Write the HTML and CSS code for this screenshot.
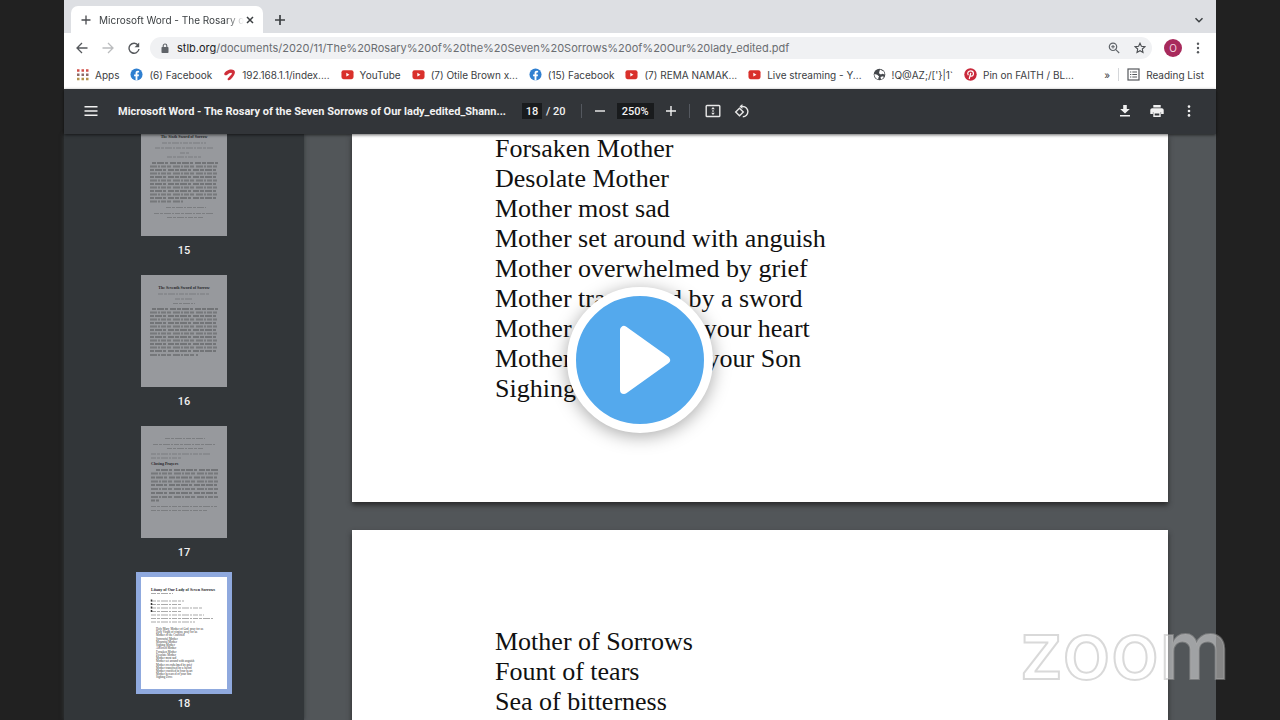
FILE: index.html
```html
<!DOCTYPE html>
<html lang="en">
<head>
    <meta charset="UTF-8">
    <meta name="viewport" content="width=device-width, initial-scale=1.0">
    <title>Microsoft Word - The Rosary of the Seven Sorrows of Our lady</title>
    <link rel="stylesheet" href="styles.css">
</head>
<body>
    <!-- Shared icons -->
    <svg class="defs" width="0" height="0" aria-hidden="true">
        <symbol id="facebook" viewBox="0 0 14 14">
            <circle cx="7" cy="7" r="6.5" fill="#2f7fd0"/>
            <path d="M6 13.4V9H4.4V7H6V5.6C6 3.9 7 3 8.5 3l1.3.1v1.7H9c-.8 0-1 .4-1 1V7h1.7l-.3 2H8v4.4z" fill="#fff"/>
        </symbol>
        <symbol id="youtube" viewBox="0 0 14 14">
            <rect x="0.5" y="2.5" width="13" height="9.5" rx="2.2" fill="#d9302b"/>
            <path d="M5.7 5.2v4l3.4-2z" fill="#fff"/>
        </symbol>
    </svg>

    <div class="screen">
        <!-- Tab strip -->
        <div class="tabs">
            <div class="tab">
                <svg width="10" height="10" viewBox="0 0 10 10"><path d="M5 .5v9M.5 5h9" stroke="#4a4c50" stroke-width="1.3"/></svg>
                <span class="tab-title">Microsoft Word - The Rosary o</span>
                <button class="icon" aria-label="Close tab"><svg width="8" height="8" viewBox="0 0 8 8"><path d="M1 1l6 6M7 1L1 7" stroke="#3c4043" stroke-width="1.5"/></svg></button>
            </div>
            <button class="icon new-tab" aria-label="New tab"><svg width="10" height="10" viewBox="0 0 10 10"><path d="M5 0v10M0 5h10" stroke="#3c4043" stroke-width="1.7"/></svg></button>
            <button class="icon push" aria-label="Search tabs"><svg width="10" height="10" viewBox="0 0 10 10"><path d="M1.5 3.2L5 6.7l3.5-3.5" fill="none" stroke="#3c4043" stroke-width="1.5"/></svg></button>
        </div>

        <!-- Address bar -->
        <div class="nav">
            <button class="icon" aria-label="Back"><svg width="12" height="12" viewBox="0 0 12 12"><path d="M11.5 6H1.2M6 1L1 6l5 5" fill="none" stroke="#55585c" stroke-width="1.3"/></svg></button>
            <button class="icon" aria-label="Forward"><svg width="12" height="12" viewBox="0 0 12 12"><path d="M.5 6h10.3M6 1l5 5-5 5" fill="none" stroke="#babcbe" stroke-width="1.3"/></svg></button>
            <button class="icon" aria-label="Reload"><svg width="12" height="12" viewBox="0 0 12 12"><path d="M10.2 3.4A5 5 0 1 0 11 7" fill="none" stroke="#55585c" stroke-width="1.4"/><path d="M11.2.6v4.6H6.6z" fill="#55585c"/></svg></button>
            <div class="address">
                <svg width="8" height="10" viewBox="0 0 8 10"><rect x="0.5" y="4" width="7" height="6" rx="0.8" fill="#5f6368"/><path d="M2.2 4.5V2.8a1.8 1.8 0 0 1 3.6 0v1.7" fill="none" stroke="#5f6368" stroke-width="1.1"/></svg>
                <label class="domain" for="url">stlb.org</label>
                <input class="url" id="url" type="text" value="/documents/2020/11/The%20Rosary%20of%20the%20Seven%20Sorrows%20of%20Our%20lady_edited.pdf">
                <button class="icon" aria-label="Zoom"><svg width="12" height="12" viewBox="0 0 12 12"><circle cx="5" cy="4.8" r="3.7" fill="none" stroke="#5f6368" stroke-width="1.2"/><path d="M7.8 7.6l3.4 3.4M3.2 4.8h3.6M5 3v3.6" stroke="#5f6368" stroke-width="1.1"/></svg></button>
                <button class="icon" aria-label="Bookmark"><svg width="12" height="12" viewBox="0 0 12 12"><path d="M6 1.2l1.4 3.1 3.5.4-2.6 2.3.7 3.5-3-1.8-3 1.8.7-3.5L1.1 4.7l3.5-.4z" fill="none" stroke="#4a4d51" stroke-width="1.1"/></svg></button>
            </div>
            <button class="avatar">O</button>
            <button class="icon" aria-label="Menu"><svg width="4" height="12" viewBox="0 0 4 12"><g fill="#55585c"><circle cx="2" cy="1.7" r="1.2"/><circle cx="2" cy="6" r="1.2"/><circle cx="2" cy="10.3" r="1.2"/></g></svg></button>
        </div>

        <!-- Bookmarks -->
        <div class="bookmarks">
            <a href="#">
                <svg width="13" height="13" viewBox="0 0 13 13"><path d="M1 2.5h12" stroke="#d2504a" stroke-width="2.5" stroke-dasharray="2.5 2"/><path d="M1 6.8h12" stroke="#8c6a68" stroke-width="2.5" stroke-dasharray="2.5 2"/><path d="M1 11.1h12" stroke="#b3924c" stroke-width="2.5" stroke-dasharray="2.5 2"/></svg>
                Apps
            </a>
            <a href="#"><svg width="13" height="13"><use href="#facebook"/></svg>(6) Facebook</a>
            <a href="#">
                <svg width="13" height="13" viewBox="0 0 13 13"><path d="M1.3 5.6C2.5 2 8.5.3 11 2.2c2.4 2-.2 6.3-3.5 9.3-1.2 1.1-3 1-2.9-.3.1-1.3 4.5-4.3 4.3-6C8.7 3.9 6 5 4.3 6.7 2.9 8 .8 7.2 1.3 5.6z" fill="#cf2f3a"/></svg>
                192.168.1.1/index....
            </a>
            <a href="#"><svg width="13" height="13"><use href="#youtube"/></svg>YouTube</a>
            <a href="#"><svg width="13" height="13"><use href="#youtube"/></svg>(7) Otile Brown x...</a>
            <a href="#"><svg width="13" height="13"><use href="#facebook"/></svg>(15) Facebook</a>
            <a href="#"><svg width="13" height="13"><use href="#youtube"/></svg>(7) REMA NAMAK...</a>
            <a href="#"><svg width="13" height="13"><use href="#youtube"/></svg>Live streaming - Y...</a>
            <a href="#">
                <svg width="13" height="13" viewBox="0 0 13 13"><circle cx="6.5" cy="6.5" r="5.8" fill="#45484c"/><path d="M7 1.5l4 2.3.6 2.7-2.2-.8-1.5.8L6 5.2l.3-1.5zM1.4 6l2.8.8 1.9 1.7-.8 1.5v1.6C3 11 1.3 8.8 1.4 6zM7.5 9l2.5-.7.8.7c-.6 1.2-1.6 2-2.8 2.5z" fill="#fff"/></svg>
                !Q@AZ;/['}|1`
            </a>
            <a href="#">
                <svg width="13" height="13" viewBox="0 0 13 13"><circle cx="6.5" cy="6.5" r="6.2" fill="#c9283a"/><path d="M4.3 7.2C2.8 4.8 4.5 2.9 6.7 2.9c3.6 0 3.4 5.2.7 5.2-.8 0-1.2-.5-1.2-.5M6.8 4.8L5.2 11" fill="none" stroke="#fff" stroke-width="1.2"/></svg>
                Pin on FAITH / BL...
            </a>
            <button class="more" aria-label="More bookmarks">»</button>
            <a class="reading" href="#">
                <svg width="13" height="13" viewBox="0 0 13 13"><rect x="1" y="1" width="11" height="11" fill="none" stroke="#55585c" stroke-width="1.2"/><path d="M3 4h1.3M3 6.5h1.3M3 9h1.3M5.3 4H10M5.3 6.5H10M5.3 9H10" stroke="#55585c" stroke-width="1.1"/></svg>
                Reading List
            </a>
        </div>

        <!-- PDF toolbar -->
        <header class="toolbar">
            <button class="icon" aria-label="Toggle sidebar"><svg width="14" height="12" viewBox="0 0 14 12"><path d="M.5 1.8h13M.5 6h13M.5 10.2h13" stroke="#f1f1f1" stroke-width="1.5"/></svg></button>
            <h1 class="doc-title">Microsoft Word - The Rosary of the Seven Sorrows of Our lady_edited_Shann...</h1>
            <div class="page-count">
                <input class="field page-no" type="text" value="18" aria-label="Page">
                <span>/ 20</span>
            </div>
            <span class="sep"></span>
            <div class="zoom-group">
                <button class="icon" aria-label="Zoom out"><svg width="12" height="12" viewBox="0 0 12 12"><path d="M1 6h10" stroke="#f1f1f1" stroke-width="1.4"/></svg></button>
                <input class="field zoom-level" type="text" value="250%" aria-label="Zoom level">
                <button class="icon" aria-label="Zoom in"><svg width="12" height="12" viewBox="0 0 12 12"><path d="M1 6h10M6 1v10" stroke="#f1f1f1" stroke-width="1.4"/></svg></button>
            </div>
            <span class="sep"></span>
            <button class="icon fit" aria-label="Fit to page"><svg width="16" height="14" viewBox="0 0 16 14"><rect x="1.2" y="1.5" width="13.6" height="11" rx="0.8" fill="none" stroke="#e8e8e8" stroke-width="1.4"/><path d="M8 3l1.8 2.200H6.200zM8 11L6.200 8.800h3.600zM7.300 6.300h1.400v1.400H7.300z" fill="#e8e8e8"/></svg></button>
            <button class="icon" aria-label="Rotate"><svg width="16" height="14" viewBox="0 0 16 14"><path d="M5.5 4.2l3.8 3.7-3.8 3.8L1.7 7.9z" fill="none" stroke="#e8e8e8" stroke-width="1.4"/><path d="M6.5 2.5h2.3a5.1 5.1 0 0 1 0 10.2" fill="none" stroke="#e8e8e8" stroke-width="1.4"/><path d="M8.4 0v5L5.5 2.5z" fill="#e8e8e8"/></svg></button>
            <div class="actions">
                <button class="icon" aria-label="Download"><svg width="14" height="14" viewBox="-1 0 14 14"><path d="M4.2 1h3.6v4h3L6 9.6 1.2 5h3zM1 11h10v1.6H1z" fill="#f1f1f1"/></svg></button>
                <button class="icon" aria-label="Print"><svg width="14" height="14" viewBox="0 0 14 14"><path d="M3.3 1h7.4v2.6H3.3zM2.2 4.2h9.6c1.1 0 1.9.8 1.9 1.9v4h-2.6V8H2.9v2.1H.3v-4c0-1.1.8-1.9 1.9-1.9z" fill="#f1f1f1"/><path d="M4 8.7h6v3.6H4z" fill="none" stroke="#f1f1f1" stroke-width="1.4"/></svg></button>
                <button class="icon" aria-label="More actions"><svg width="14" height="14" viewBox="0 0 14 14"><g fill="#f1f1f1"><circle cx="7" cy="2.6" r="1.3"/><circle cx="7" cy="7" r="1.3"/><circle cx="7" cy="11.4" r="1.3"/></g></svg></button>
            </div>
        </header>

        <div class="viewer">
            <!-- Page thumbnails -->
            <nav class="sidebar">
                <a class="thumb" href="#">
                    <svg viewBox="0 0 86 112">
                        <text class="heading" x="43" y="14" text-anchor="middle">The Sixth Sword of Sorrow</text>
                        <path class="words" d="M21 19h44M14 24h58M39 29h9M26 33h34"/>
                        <path class="words a" d="M11 39h66M9 46h68M9 53h68M9 60h68M9 67h68M9 74h68"/>
                        <path class="words b" d="M9 42.5h68M9 49.5h68M9 56.5h68M9 63.5h68M9 70.5h68M9 77.5h34"/>
                        <path class="words" d="M25 83.5h40M13 89.5h60M26 93.5h36"/>
                    </svg>
                    15
                </a>
                <a class="thumb" href="#">
                    <svg viewBox="0 0 86 112">
                        <text class="heading" x="43" y="14" text-anchor="middle">The Seventh Sword of Sorrow</text>
                        <path class="words" d="M17 19h52M34 24h18M32 28.5h22"/>
                        <path class="words a" d="M11 34h66M9 41h68M9 48h68M9 55h68M9 62h68M9 69h68M9 76h68"/>
                        <path class="words b" d="M9 37.5h68M9 44.5h68M9 51.5h68M9 58.5h68M9 65.5h68M9 72.5h68M9 80h48"/>
                    </svg>
                    16
                </a>
                <a class="thumb" href="#">
                    <svg viewBox="0 0 86 112">
                        <path class="words" d="M24 12.5h40M12 18.5h62M26 22.5h36M10 28h60M10 32h30"/>
                        <text class="heading" x="10" y="39">Closing Prayers</text>
                        <path class="words a" d="M15 44h62M10 51.5h67M10 59h67M10 67h67M10 74.5h8"/>
                        <path class="words b" d="M10 47.5h67M10 55.5h67M10 63h67M10 71h67"/>
                        <path class="words" d="M10 80.5h66M10 84.5h56"/>
                    </svg>
                    17
                </a>
                <a class="thumb current" href="#">
                    <svg viewBox="0 0 86 112">
                        <text class="heading" x="10" y="14">Litany of Our Lady of Seven Sorrows</text>
                        <path class="words" d="M10 16.5h22M10 24h33M10 27.5h30M10 31h51M10 34.5h31M10 38h53M10 41.5h63M10 45h44"/>
                        <path class="initials" d="M10.5 22.5v13"/>
                        <g class="litany">
                            <text x="15" y="53">Holy Mary, Mother of God, pray for us</text>
                            <text x="15" y="56">Holy Virgin of virgins, pray for us</text>
                            <text x="15" y="59">Mother of the Crucified</text>
                            <text x="15" y="63">Sorrowful Mother</text>
                            <text x="15" y="66">Mournful Mother</text>
                            <text x="15" y="69">Sighing Mother</text>
                            <text x="15" y="72">Afflicted Mother</text>
                            <text x="15" y="76">Forsaken Mother</text>
                            <text x="15" y="79">Desolate Mother</text>
                            <text x="15" y="82">Mother most sad</text>
                            <text x="15" y="85">Mother set around with anguish</text>
                            <text x="15" y="89">Mother overwhelmed by grief</text>
                            <text x="15" y="92">Mother transfixed by a sword</text>
                            <text x="15" y="95">Mother crucified in your heart</text>
                            <text x="15" y="98">Mother bereaved of your Son</text>
                            <text x="15" y="101">Sighing Dove</text>
                        </g>
                    </svg>
                    18
                </a>
            </nav>

            <!-- Document pages -->
            <main class="pages">
                <section class="page">
                    <p>Forsaken Mother</p>
                    <p>Desolate Mother</p>
                    <p>Mother most sad</p>
                    <p>Mother set around with anguish</p>
                    <p>Mother overwhelmed by grief</p>
                    <p>Mother transfixed by a sword</p>
                    <p>Mother crucified in your heart</p>
                    <p>Mother bereaved of your Son</p>
                    <p>Sighing Dove</p>
                </section>
                <section class="page">
                    <p>Mother of Sorrows</p>
                    <p>Fount of tears</p>
                    <p>Sea of bitterness</p>
                </section>
            </main>
        </div>
    </div>

    <!-- Video overlay -->
    <button class="play" aria-label="Play"><svg width="54" height="72" viewBox="0 0 54 72"><path d="M6 6v60L48 36z" fill="#fff" stroke="#fff" stroke-width="8" stroke-linejoin="round"/></svg></button>
    <div class="watermark">zoom</div>
</body>
</html>
```

FILE: styles.css
```css
* {
    box-sizing: border-box;
}
body {
    margin: 0;
    padding: 0 5%;
    height: 100vh;
    overflow: hidden;
    position: relative;
    background-color: #212121;
    font-family: Inter, "Liberation Sans", sans-serif;
    font-size: 10px;
    color: #3c4043;
}
.defs {
    position: absolute;
}
.screen {
    display: flex;
    flex-direction: column;
    height: 100%;
    background-color: white;
}
svg {
    display: block;
    flex: none;
}
button, input {
    font: inherit;
    color: inherit;
    border: none;
    padding: 0;
    background: none;
}
.icon {
    display: flex;
    flex: none;
    cursor: pointer;
}

/* Tab strip */
.tabs {
    display: flex;
    align-items: center;
    flex: none;
    height: 33px;
    padding: 6px 12px 0 7px;
    background-color: #dddfe3;
}
.tab {
    display: flex;
    align-items: center;
    width: 192px;
    height: 27px;
    padding: 0 9px 0 10px;
    border-radius: 7px 7px 0 0;
    background-color: white;
}
.tab-title {
    flex: 1;
    margin: 0 2px 0 8px;
    white-space: nowrap;
    -webkit-mask-image: linear-gradient(90deg, black 88%, transparent);
    mask-image: linear-gradient(90deg, black 88%, transparent);
}
.new-tab {
    margin-left: 12px;
}
.push {
    margin-left: auto;
}

/* Address bar */
.nav {
    display: flex;
    align-items: center;
    flex: none;
    gap: 14px;
    height: 29px;
    padding: 0 16px 0 12px;
}
.address {
    display: flex;
    align-items: center;
    flex: 1;
    height: 22px;
    padding: 0 6px 0 11px;
    border-radius: 11px;
    background-color: #f0f1f3;
    font-size: 11px;
}
.nav .address {
    margin-left: -4px;
}
.domain {
    margin-left: 8px;
    color: #202124;
}
.url {
    flex: 1;
    min-width: 0;
    color: #6a6d71;
}
.address .icon {
    margin-left: 14px;
}
.avatar {
    width: 18px;
    height: 18px;
    margin-left: -2px;
    border-radius: 50%;
    background-color: #a82a5c;
    color: #f3d5e0;
    line-height: 18px;
}

/* Bookmarks */
.bookmarks {
    display: flex;
    align-items: center;
    flex: none;
    gap: 11px;
    height: 27px;
    padding: 0 12px 2px;
    white-space: nowrap;
}
.bookmarks a {
    display: flex;
    align-items: center;
    gap: 6px;
    color: inherit;
    text-decoration: none;
}
.more {
    margin-left: auto;
}
.bookmarks .reading {
    margin-left: -3px;
    padding-left: 8px;
    border-left: 1px solid #d5d7da;
}

/* PDF toolbar */
.toolbar {
    display: flex;
    align-items: center;
    flex: none;
    height: 45px;
    padding: 0 20px 1px;
    background-color: #323539;
    box-shadow: 0 1px 3px rgba(0, 0, 0, 0.6);
    color: #f1f1f1;
    font-family: Roboto, sans-serif;
    font-size: 11px;
    font-weight: 500;
    position: relative;
}
.doc-title {
    margin: 0 16px 0 20px;
    font-size: 11px;
    font-weight: 700;
    white-space: nowrap;
}
.page-count, .zoom-group {
    display: flex;
    align-items: center;
    gap: 4px;
}
.page-count {
    margin-right: 3px;
}
.zoom-group {
    gap: 11px;
}
.field {
    height: 16px;
    background-color: #191b1d;
    text-align: center;
}
.page-no {
    width: 20px;
}
.zoom-level {
    width: 37px;
}
.sep {
    width: 1px;
    height: 14px;
    margin: 0 12px;
    background-color: #54585f;
}
.fit {
    margin: 0 13px 0 3px;
}
.actions {
    display: flex;
    align-items: center;
    gap: 18px;
    margin-left: auto;
}

/* Sidebar and pages */
.viewer {
    display: flex;
    flex: 1;
    min-height: 0;
    background-color: #525659;
}
.sidebar {
    flex: none;
    width: 240px;
    overflow: hidden;
    background-color: #323639;
    box-shadow: 0 0 4px #323639;
}
.thumb {
    display: flex;
    flex-direction: column;
    align-items: center;
    gap: 1px;
    height: 151px;
    color: #f1f1f1;
    font-family: Roboto, sans-serif;
    font-size: 11px;
    font-weight: 500;
    line-height: 18px;
    text-decoration: none;
}
/* list is scrolled so that the first thumbnail is cut off */
.thumb:first-child {
    margin-top: -15px;
}
.thumb svg {
    width: 96px;
    height: 122px;
    border: 5px solid transparent;
    background-color: #97999d;
    background-clip: padding-box;
}
.thumb.current svg {
    border-color: #8fa9de;
    background-color: white;
}
.heading {
    font-family: "Liberation Serif", serif;
    font-size: 4px;
    font-weight: bold;
    fill: #26282a;
}
.litany {
    font-family: "Liberation Serif", serif;
    font-size: 3px;
    fill: #333;
}
.words {
    fill: none;
    stroke: #7b7d80;
    stroke-width: 1.2;
    stroke-dasharray: 5 1 3 1 7 1 2 1;
}
.words.a {
    stroke: #727477;
    stroke-width: 2;
    stroke-dasharray: 4 1 7 1 3 2 6 1;
}
.words.b {
    stroke: #76787b;
    stroke-width: 2;
    stroke-dasharray: 7 1 2 1 5 1 4 2;
}
.current .words {
    stroke: #aaa;
}
.initials {
    stroke: #333;
    stroke-width: 1.5;
    stroke-dasharray: 2 1.5;
}
.pages {
    flex: 1;
    min-width: 0;
    padding: 0 48px;
    overflow: hidden;
}
.page {
    padding: 97px 0 98px 143px;
    background-color: white;
    box-shadow: 0 3px 5px rgba(30, 30, 30, 0.8);
    color: #111;
    font-family: "Liberation Serif", serif;
    font-size: 26px;
    line-height: 30px;
}
.page:first-child {
    padding-top: 0;
    margin-bottom: 28px;
}
.page p {
    margin: 0;
}

/* Video overlay */
.play {
    display: flex;
    align-items: center;
    justify-content: center;
    position: absolute;
    top: 50%;
    left: 50%;
    width: 146px;
    height: 146px;
    padding-left: 10px;
    transform: translate(-50%, -50%);
    border: 9px solid white;
    border-radius: 50%;
    background-color: #54a9ed;
    box-shadow: 0 3px 18px rgba(0, 0, 0, 0.35);
    cursor: pointer;
}
.watermark {
    position: absolute;
    right: 50px;
    bottom: 30px;
    color: rgba(255, 255, 255, 0.45);
    font-family: Inter, sans-serif;
    font-size: 80px;
    font-weight: 500;
    line-height: 80px;
    -webkit-text-stroke: 2px rgba(170, 170, 170, 0.45);
}
```
